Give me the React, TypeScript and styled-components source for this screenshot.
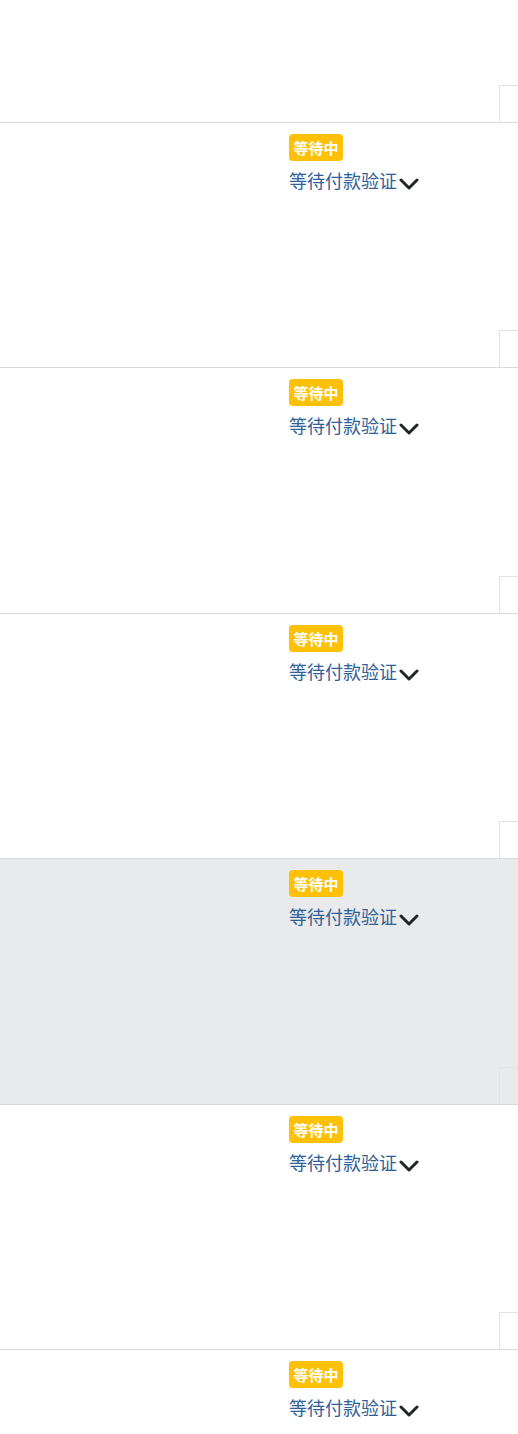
import React from 'react';
import styled, { createGlobalStyle } from 'styled-components';

const GlobalStyle = createGlobalStyle`
  html, body {
    margin: 0;
    padding: 0;
    background: #ffffff;
    font-family: "Noto Sans", "Noto Sans CJK SC", sans-serif;
  }
  body {
    overflow: hidden;
  }
`;

const Table = styled.div`
  width: 518px;
  display: flex;
  flex-direction: column;
`;

const Row = styled.div<{ $shaded?: boolean; $height: number; $first?: boolean }>`
  box-sizing: border-box;
  height: ${(p) => p.$height}px;
  display: grid;
  grid-template-columns: 277px 222px 1fr;
  grid-template-rows: 1fr 37px;
  border-top: ${(p) => (p.$first ? 'none' : '1px solid #d9dcdf')};
  background: ${(p) => (p.$shaded ? '#e9eaec' : '#ffffff')};
  overflow: hidden;
`;

const StatusCell = styled.div`
  grid-column: 2 / 4;
  grid-row: 1;
  padding: 11px 12px 0 12px;
  display: flex;
  flex-direction: column;
  align-items: flex-start;
  gap: 6px;
`;

const Badge = styled.span`
  display: inline-block;
  background: #ffc107;
  color: #ffffff;
  font-family: "Noto Sans CJK SC", sans-serif;
  font-weight: 700;
  font-size: 15px;
  line-height: 20px;
  padding: 4px 4.5px 3px;
  border-radius: 4px;
`;

const StatusLink = styled.div`
  font-family: "Noto Sans CJK SC", sans-serif;
  font-size: 18px;
  line-height: 27px;
  color: #2f6196;
  white-space: nowrap;
  display: flex;
  align-items: center;
`;

const Chevron = styled.svg`
  width: 20px;
  height: 12px;
  margin-left: 2px;
  margin-top: 7px;
`;

const CornerBox = styled.div`
  grid-column: 3;
  grid-row: 2;
  border-left: 1px solid #e2e2e2;
  border-top: 1px solid #e2e2e2;
`;

const heights = [245, 246, 245, 246, 245];

const StatusRow = ({
  shaded,
  height,
  corner = true,
}: {
  shaded?: boolean;
  height: number;
  corner?: boolean;
}) => (
  <Row $shaded={shaded} $height={height}>
    <StatusCell>
      <Badge>等待中</Badge>
      <StatusLink>
        等待付款验证
        <Chevron viewBox="0 0 20 12" fill="none">
          <polyline
            points="2,2 10,10 18,2"
            stroke="#212529"
            strokeWidth="3"
            strokeLinecap="round"
            strokeLinejoin="round"
          />
        </Chevron>
      </StatusLink>
    </StatusCell>
    {corner && <CornerBox />}
  </Row>
);

const App = () => (
  <>
    <GlobalStyle />
    <Table>
      <Row $first $height={122}>
        <CornerBox />
      </Row>
      {heights.map((h, i) => (
        <StatusRow key={i} height={h} shaded={i === 3} />
      ))}
      <StatusRow height={85} corner={false} />
    </Table>
  </>
);

export default App;
